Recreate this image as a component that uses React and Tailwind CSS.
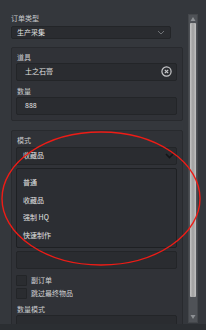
import React from 'react';

const font = { fontFamily: '"Noto Sans CJK SC", "Noto Sans", sans-serif' };

const Label = ({ children }) => (
  <div className="h-[9px] leading-[9px] text-[7px] text-[#c9cacc] pl-[1px]">{children}</div>
);

const Field = ({ children, className = '' }) => (
  <div className={`h-[18px] rounded-[2px] bg-[#2a2c30] border border-[#232528] flex items-center text-[7px] text-[#e2e2e2] ${className}`}>
    {children}
  </div>
);

const Check = ({ label }) => (
  <div className="flex items-center gap-[4px]">
    <div className="w-[11px] h-[11px] bg-[#2a2c30] border border-[#232528] rounded-[1px]" />
    <span className="text-[7px] leading-[9px] text-[#d2d3d5]">{label}</span>
  </div>
);

const App = () => {
  const modes = ['普通', '收藏品', '强制 HQ', '快速制作'];

  return (
    <div className="relative w-[206px] h-[330px] bg-[#2b2e32] overflow-hidden" style={font}>
      <div className="h-[324px] bg-[#34373c] flex overflow-hidden">
        {/* content */}
        <div className="w-[183px] pl-[11px] pt-[14px] flex flex-col shrink-0">
          <div className="pl-[-1px]">
            <div className="h-[9px] leading-[9px] text-[7px] text-[#c9cacc]">订单类型</div>
          </div>
          <Field className="mt-[3px] w-[160px] pl-[5px] pr-[4px] justify-between">
            <span>生产采集</span>
            <svg width="8" height="5" viewBox="0 0 8 5" className="mr-[1px]">
              <path d="M1 1 L4 4 L7 1" fill="none" stroke="#6f7276" strokeWidth="1" />
            </svg>
          </Field>

          {/* card 1 */}
          <div className="mt-[8px] w-[172px] bg-[#303237] border border-[#282a2e] rounded-[2px] pl-[4px] pr-[5px] pt-[5px] pb-[5px] flex flex-col">
            <Label>道具</Label>
            <Field className="mt-[1px] pl-[8px] pr-[4px] justify-between">
              <span>土之石膏</span>
              <svg width="11" height="11" viewBox="0 0 11 11">
                <circle cx="5.5" cy="5.5" r="4.6" fill="none" stroke="#c9cacc" strokeWidth="1.2" />
                <path d="M3.8 3.8 L7.2 7.2 M7.2 3.8 L3.8 7.2" stroke="#c9cacc" strokeWidth="1.2" />
              </svg>
            </Field>
            <div className="mt-[6px]">
              <Label>数量</Label>
            </div>
            <Field className="mt-[1px] pl-[8px]">
              <span>888</span>
            </Field>
          </div>

          {/* card 2 */}
          <div className="mt-[9px] w-[172px] bg-[#303237] border border-[#282a2e] rounded-[2px] pl-[4px] pr-[5px] pt-[5px] flex flex-col">
            <Label>模式</Label>
            <Field className="mt-[2px] pl-[6px] pr-[2px] justify-between">
              <span>收藏品</span>
              <svg width="9" height="6" viewBox="0 0 9 6">
                <path d="M1 1 L4.5 4.5 L8 1" fill="none" stroke="#141517" strokeWidth="1.6" />
              </svg>
            </Field>
            <div className="mt-[3px] h-[80px] rounded-[2px] bg-[#2c2e33] border border-[#1e2023] pt-[5px] flex flex-col">
              {modes.map((m) => (
                <div key={m} className="h-[17.5px] flex items-center pl-[6px] text-[7px] text-[#e2e2e2]">
                  {m}
                </div>
              ))}
            </div>
            <Field className="mt-[3px]" />
            <div className="mt-[6px] flex flex-col gap-[2px]">
              <Check label="副订单" />
              <Check label="跳过最终物品" />
            </div>
            <div className="mt-[6px]">
              <Label>数量模式</Label>
            </div>
            <Field className="mt-[1px]" />
          </div>
        </div>

        {/* scrollbar */}
        <div className="ml-[5px] mt-[14px] w-[10px] h-[309px] bg-[#4f5257] border border-[#44474b] flex flex-col items-center shrink-0">
          <svg width="6" height="6" viewBox="0 0 6 6" className="mt-[1px]">
            <path d="M3 1 L5.5 5 L0.5 5 Z" fill="#8d9094" />
          </svg>
          <div className="w-[6px] h-[274px] mt-[1px] rounded-[1px] bg-gradient-to-r from-[#c4c4c4] via-[#9e9e9e] to-[#c4c4c4]" />
          <div className="flex-1" />
          <svg width="6" height="6" viewBox="0 0 6 6" className="mb-[2px]">
            <path d="M0.5 1 L5.5 1 L3 5 Z" fill="#8d9094" />
          </svg>
        </div>
      </div>

      {/* red annotation ellipse */}
      <svg className="absolute left-0 top-0 pointer-events-none" width="206" height="330" viewBox="0 0 206 330">
        <ellipse cx="101" cy="198.5" rx="99" ry="66.5" fill="none" stroke="#ee1c16" strokeWidth="1.4" />
      </svg>
    </div>
  );
};

export default App;
